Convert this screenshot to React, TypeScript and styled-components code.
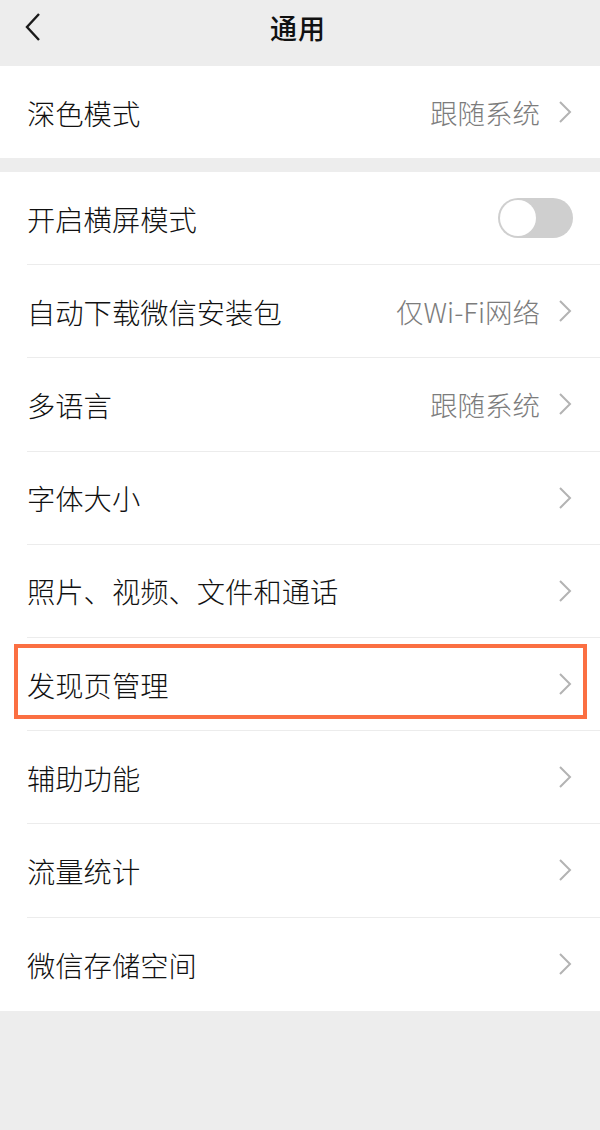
import React from 'react';
import styled, { createGlobalStyle } from 'styled-components';

const GlobalStyle = createGlobalStyle`
  html, body {
    margin: 0;
    padding: 0;
    background: #ededed;
  }
  body {
    font-family: "Noto Sans CJK SC", "Noto Sans", sans-serif;
    -webkit-font-smoothing: antialiased;
  }
`;

const Page = styled.div`
  width: 600px;
  min-height: 1130px;
  background: #ededed;
`;

const Header = styled.div`
  height: 66px;
  box-sizing: border-box;
  padding-bottom: 12px;
  display: grid;
  grid-template-columns: 80px 1fr 80px;
  align-items: center;
`;

const BackButton = styled.div`
  padding-left: 23px;
  display: flex;
  align-items: center;
`;

const Title = styled.div`
  text-align: center;
  font-size: 27px;
  font-weight: 500;
  color: #111;
  letter-spacing: 1px;
  padding-right: 4px;
`;

const Section = styled.div<{ $gap?: number }>`
  background: #fff;
  margin-bottom: ${p => p.$gap ?? 0}px;
`;

const Row = styled.div<{ $h: number }>`
  position: relative;
  height: ${p => p.$h}px;
  padding-left: 27px;
  box-sizing: border-box;
  display: flex;
`;

const RowBody = styled.div<{ $line: boolean }>`
  flex: 1;
  display: flex;
  align-items: center;
  padding-right: 28px;
  border-bottom: ${p => (p.$line ? '1px solid #ececec' : 'none')};
`;

const Label = styled.div`
  flex: 1;
  font-size: 28.3px;
  font-weight: 300;
  color: #111;
`;

const Value = styled.div`
  font-size: 27.5px;
  font-weight: 300;
  color: #7c7c7c;
  margin-right: 18px;
`;

const Toggle = styled.div`
  width: 75px;
  height: 40px;
  border-radius: 20px;
  background: #cfcfcf;
  box-sizing: border-box;
  padding: 2px;
  margin-right: -1px;
  display: flex;
  align-items: center;
`;

const Knob = styled.div`
  width: 36px;
  height: 36px;
  border-radius: 50%;
  background: #fff;
`;

const Highlight = styled.div`
  position: absolute;
  left: 14px;
  right: 13px;
  top: 6px;
  bottom: 12px;
  border: 4px solid #fb6f42;
  pointer-events: none;
`;

const Chevron = () => (
  <svg width="14" height="24" viewBox="0 0 14 24">
    <path d="M2 2 L12 12 L2 22" fill="none" stroke="#b3b3b3" strokeWidth="2" />
  </svg>
);

const BackIcon = () => (
  <svg width="20" height="30" viewBox="0 0 20 30">
    <path d="M16 2 L4 15 L16 28" fill="none" stroke="#1a1a1a" strokeWidth="2.4" />
  </svg>
);

type Item = {
  label: string;
  value?: string;
  toggle?: boolean;
  highlight?: boolean;
};

const items: Item[] = [
  { label: '开启横屏模式', toggle: true },
  { label: '自动下载微信安装包', value: '仅Wi-Fi网络' },
  { label: '多语言', value: '跟随系统' },
  { label: '字体大小' },
  { label: '照片、视频、文件和通话' },
  { label: '发现页管理', highlight: true },
  { label: '辅助功能' },
  { label: '流量统计' },
  { label: '微信存储空间' },
];

export default function App() {
  return (
    <Page>
      <GlobalStyle />
      <Header>
        <BackButton>
          <BackIcon />
        </BackButton>
        <Title>通用</Title>
        <div />
      </Header>

      <Section $gap={14}>
        <Row $h={92}>
          <RowBody $line={false}>
            <Label>深色模式</Label>
            <Value>跟随系统</Value>
            <Chevron />
          </RowBody>
        </Row>
      </Section>

      <Section>
        {items.map((item, i) => (
          <Row key={item.label} $h={93.2}>
            <RowBody $line={i < items.length - 1}>
              <Label>{item.label}</Label>
              {item.value && <Value>{item.value}</Value>}
              {item.toggle ? (
                <Toggle>
                  <Knob />
                </Toggle>
              ) : (
                <Chevron />
              )}
            </RowBody>
            {item.highlight && <Highlight />}
          </Row>
        ))}
      </Section>
    </Page>
  );
}
